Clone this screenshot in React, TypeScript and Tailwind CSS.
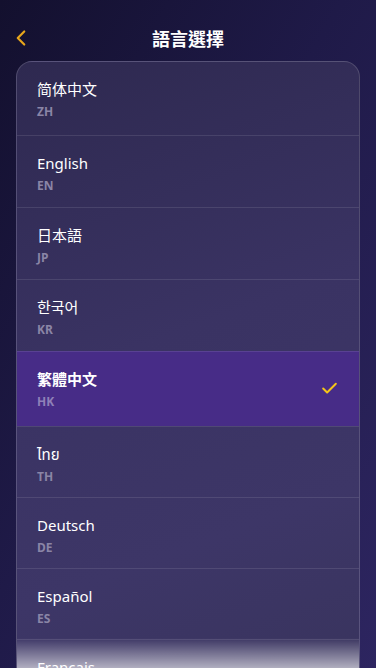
import { Check, ChevronLeft } from "lucide-react";

const languages = [
  { label: "简体中文", code: "ZH" },
  { label: "English", code: "EN" },
  { label: "日本語", code: "JP" },
  { label: "한국어", code: "KR" },
  { label: "繁體中文", code: "HK" },
  { label: "ไทย", code: "TH" },
  { label: "Deutsch", code: "DE" },
  { label: "Español", code: "ES" },
  { label: "Français", code: "FR" },
  { label: "Italiano", code: "IT" },
] as const;

const selected = "HK";

export default function App() {
  return (
    <div
      className="flex h-[668px] flex-col overflow-hidden bg-[linear-gradient(120deg,#13102e_0%,#1f1a48_45%,#2d2560_100%)] text-white"
      style={{ fontFamily: '"Noto Sans", "Noto Sans CJK TC", "Noto Sans Thai", sans-serif' }}
    >
      <header className="relative flex h-[61px] shrink-0 items-center justify-center pt-[16px]">
        <button className="absolute left-[8px] top-[25px] text-[#e8a61c]" aria-label="back">
          <ChevronLeft className="size-[26px]" strokeWidth={2} />
        </button>
        <h1 className="text-[18px] font-bold leading-none">語言選擇</h1>
      </header>

      <div className="relative mx-4 flex-1 overflow-hidden rounded-t-2xl border border-b-0 border-white/15 bg-[linear-gradient(160deg,#2e2950_0%,#3a3363_45%,#3d3667_75%,#39345e_100%)]">
        <ul>
          {languages.map((lang, i) => {
            const active = lang.code === selected;
            const pad = i === 0 ? "pb-[15px]" : active ? "pb-[16px]" : i < 4 ? "pb-[13px]" : "pb-[12px]";
            return (
              <li
                key={lang.code}
                className={`flex items-center justify-between pl-5 pr-5 pt-[15px] ${pad} ${
                  i > 0 ? "border-t border-white/10" : ""
                } ${active ? "bg-[#472c87]" : ""}`}
              >
                <div>
                  <p className={`text-[15px] leading-6 ${active ? "font-bold" : "font-normal"}`}>
                    {lang.label}
                  </p>
                  <p
                    className={`mt-[3px] text-[12px] font-bold leading-4 ${
                      active ? "text-[#8f80b8]" : "text-[#8a85a6]"
                    }`}
                  >
                    {lang.code}
                  </p>
                </div>
                {active && <Check className="size-[19px] text-[#f5c518]" strokeWidth={2.5} />}
              </li>
            );
          })}
        </ul>
        <div className="pointer-events-none absolute inset-x-0 bottom-0 h-[30px] bg-gradient-to-b from-white/0 to-white/60" />
      </div>
    </div>
  );
}
